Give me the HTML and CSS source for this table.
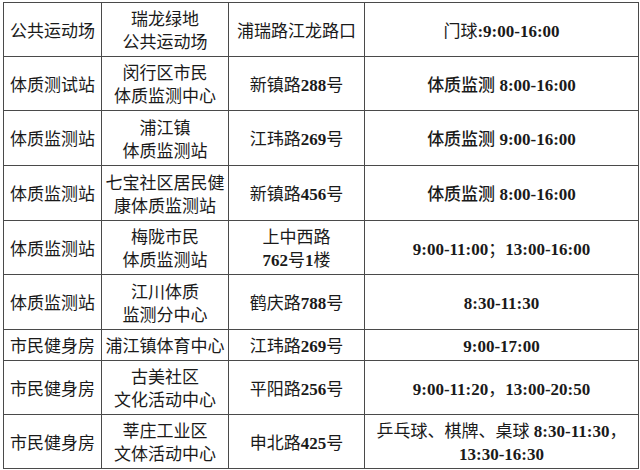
FILE: index.html
```html
<!DOCTYPE html>
<html lang="zh-CN">
<head>
<meta charset="utf-8">
<title>场馆开放时间</title>
<link rel="stylesheet" href="styles.css">
</head>
<body>
<table class="venues">
  <colgroup>
    <col class="c-type">
    <col class="c-name">
    <col class="c-addr">
    <col class="c-time">
  </colgroup>
  <tbody>
    <tr class="r-54">
      <td>公共运动场</td>
      <td>瑞龙绿地<br>公共运动场</td>
      <td>浦瑞路江龙路口</td>
      <td class="time">门球<b>:9:00-16:00</b></td>
    </tr>
    <tr class="r-54">
      <td>体质测试站</td>
      <td>闵行区市民<br>体质监测中心</td>
      <td>新镇路<b>288</b>号</td>
      <td class="time"><span class="cjk-b">体质监测</span> <b>8:00-16:00</b></td>
    </tr>
    <tr class="r-55">
      <td>体质监测站</td>
      <td>浦江镇<br>体质监测站</td>
      <td>江玮路<b>269</b>号</td>
      <td class="time"><span class="cjk-b">体质监测</span> <b>9:00-16:00</b></td>
    </tr>
    <tr class="r-55">
      <td>体质监测站</td>
      <td>七宝社区居民健<br>康体质监测站</td>
      <td>新镇路<b>456</b>号</td>
      <td class="time"><span class="cjk-b">体质监测</span> <b>8:00-16:00</b></td>
    </tr>
    <tr class="r-54">
      <td>体质监测站</td>
      <td>梅陇市民<br>体质监测站</td>
      <td>上中西路<br><b>762</b>号<b>1</b>楼</td>
      <td class="time"><b>9:00-11:00</b>；<b>13:00-16:00</b></td>
    </tr>
    <tr class="r-55">
      <td>体质监测站</td>
      <td>江川体质<br>监测分中心</td>
      <td>鹤庆路<b>788</b>号</td>
      <td class="time"><b>8:30-11:30</b></td>
    </tr>
    <tr class="r-31">
      <td>市民健身房</td>
      <td>浦江镇体育中心</td>
      <td>江玮路<b>269</b>号</td>
      <td class="time"><b>9:00-17:00</b></td>
    </tr>
    <tr class="r-54">
      <td>市民健身房</td>
      <td>古美社区<br>文化活动中心</td>
      <td>平阳路<b>256</b>号</td>
      <td class="time"><b>9:00-11:20</b>，<b>13:00-20:50</b></td>
    </tr>
    <tr class="r-54">
      <td>市民健身房</td>
      <td>莘庄工业区<br>文体活动中心</td>
      <td>申北路<b>425</b>号</td>
      <td class="time">乒乓球、棋牌、桌球 <b>8:30-11:30</b>，<br><b>13:30-16:30</b></td>
    </tr>
  </tbody>
</table>
</body>
</html>
```

FILE: styles.css
```css
html, body {
  margin: 0;
  padding: 0;
  background: #ffffff;
}

body {
  padding: 2px 0 0 3px;
}

.venues {
  border-collapse: collapse;
  table-layout: fixed;
  width: 635px;
  font-family: "Liberation Serif", "Noto Sans CJK SC", serif;
  font-size: 17px;
  line-height: 23px;
  color: #1a1a1a;
}

.c-type { width: 98px; }
.c-name { width: 127px; }
.c-addr { width: 136px; }
.c-time { width: 274px; }

.venues td {
  border: 1.5px solid #4a4a4a;
  padding: 3px 0 0 0;
  text-align: center;
  vertical-align: middle;
  white-space: nowrap;
  overflow: hidden;
}

.venues b {
  font-weight: 700;
}

.cjk-b {
  font-weight: 500;
}

.r-54 { height: 54px; }
.r-55 { height: 55px; }
.r-31 { height: 31px; }
```
